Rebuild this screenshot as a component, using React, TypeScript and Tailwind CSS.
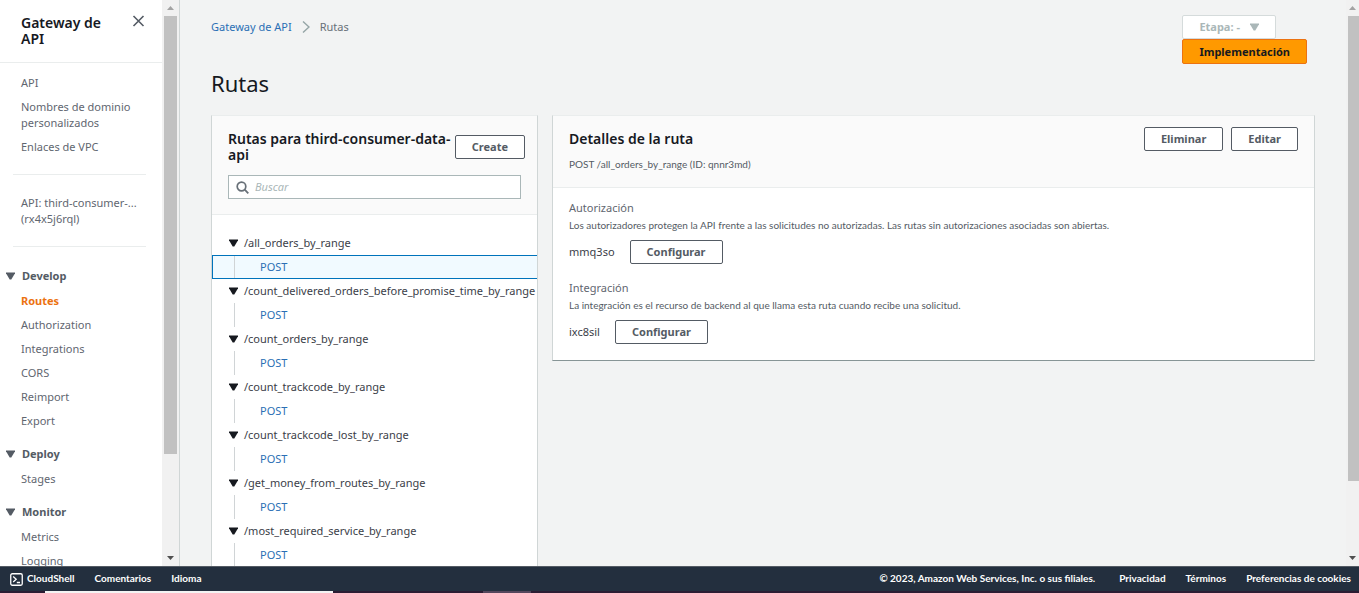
import React from "react";

const topLinks = ["API", "Nombres de dominio personalizados", "Enlaces de VPC"];

const sections = [
  { title: "Develop", items: ["Routes", "Authorization", "Integrations", "CORS", "Reimport", "Export"] },
  { title: "Deploy", items: ["Stages"] },
  { title: "Monitor", items: ["Metrics", "Logging"] },
];

const routes = [
  "/all_orders_by_range",
  "/count_delivered_orders_before_promise_time_by_range",
  "/count_orders_by_range",
  "/count_trackcode_by_range",
  "/count_trackcode_lost_by_range",
  "/get_money_from_routes_by_range",
  "/most_required_service_by_range",
];

function Caret({ className = "" }: { className?: string }) {
  return (
    <svg viewBox="0 0 9 8" className={`h-2 w-[9px] shrink-0 ${className}`} aria-hidden="true">
      <path d="M0 .5h9v.8L5.300 7.500H3.700L0 1.300z" fill="currentColor" />
    </svg>
  );
}

function Scrollbar({ className, thumb }: { className: string; thumb: string }) {
  return (
    <div className={`flex shrink-0 flex-col items-center bg-[#f1f1f1] ${className}`} aria-hidden="true">
      <svg viewBox="0 0 7 4" className="my-1.5 h-1 w-[7px] shrink-0 text-[#a3a3a3]">
        <path d="M0 4h7L3.5 0z" fill="currentColor" />
      </svg>
      <div className="flex w-full flex-1 flex-col">
        <div className={`bg-[#c1c1c1] ${thumb}`} />
      </div>
      <svg viewBox="0 0 7 4" className="my-1.5 h-1 w-[7px] shrink-0 text-[#505050]">
        <path d="M0 0h7L3.5 4z" fill="currentColor" />
      </svg>
    </div>
  );
}

function Button({ children }: { children: React.ReactNode }) {
  return (
    <button
      type="button"
      className="h-6 shrink-0 rounded-xs border border-[#545b64] bg-white px-4 text-[11px] leading-4 font-bold text-[#545b64]"
    >
      {children}
    </button>
  );
}

function Sidebar() {
  return (
    <aside className="flex w-[180px] shrink-0 border-r border-[#d0d6d6] bg-white">
      <nav className="min-w-0 flex-1 overflow-hidden text-[11px] leading-4 text-[#5f6670]">
        <div className="flex items-start justify-between border-b border-[#eaeded] pt-[15px] pr-[17px] pb-[15px] pl-[21px]">
          <h2 className="w-24 text-sm leading-4 font-semibold text-[#16191f]">Gateway de API</h2>
          <button type="button" aria-label="Cerrar" className="text-[#545b64]">
            <svg viewBox="0 0 13 12" className="h-3 w-[13px]" aria-hidden="true">
              <path d="M1.5 1l10 10M11.5 1l-10 10" stroke="currentColor" strokeWidth="1.6" fill="none" />
            </svg>
          </button>
        </div>
        <ul className="flex flex-col gap-2 pt-3 pr-4 pl-[21px]">
          {topLinks.map((l) => (
            <li key={l}>
              <a href="#">{l}</a>
            </li>
          ))}
        </ul>
        <div className="mt-[19px] mr-4 ml-[13px] border-y border-[#eaeded] pt-5 pb-[19px] pl-2">
          <a href="#" className="block">
            API: third-consumer-...
            <br />
            (rx4x5j6rql)
          </a>
        </div>
        <div className="flex flex-col gap-[17px] pt-[21px]">
          {sections.map((s) => (
            <section key={s.title}>
              <h3>
                <button type="button" className="flex items-center gap-[7px] pl-1.5 font-bold text-[#545b64]">
                  <Caret />
                  {s.title}
                </button>
              </h3>
              <ul className="mt-[9px] flex flex-col gap-2 pl-[21px]">
                {s.items.map((i) => (
                  <li key={i}>
                    <a href="#" className={i === "Routes" ? "font-bold text-[#ec7211]" : ""}>
                      {i}
                    </a>
                  </li>
                ))}
              </ul>
            </section>
          ))}
        </div>
      </nav>
      <Scrollbar className="w-[17px]" thumb="mx-0.5 h-[82%]" />
    </aside>
  );
}

function RoutesCard() {
  return (
    <section className="min-w-0 border border-[#d0d6d6] border-t-[#eaeded] bg-white">
      <div className="border-b border-[#eaeded] bg-[#fafafa] px-4 pt-[15px] pb-[15px]">
        <div className="-mr-1 flex items-start justify-between">
          <h2 className="min-w-0 flex-1 text-sm leading-4 font-semibold text-[#16191f]">
            Rutas para third-consumer-data-api
          </h2>
          <div className="mt-1 flex">
            <Button>Create</Button>
          </div>
        </div>
        <label className="mt-3 flex h-6 items-center gap-1.5 border border-[#aab7b8] bg-white px-[7px]">
          <svg viewBox="0 0 13 13" className="size-[13px] shrink-0 text-[#687078]" aria-hidden="true">
            <circle cx="5.5" cy="5.5" r="4.3" fill="none" stroke="currentColor" strokeWidth="1.7" />
            <path d="M8.7 8.7l3.6 3.6" stroke="currentColor" strokeWidth="1.8" />
          </svg>
          <input
            type="search"
            aria-label="Buscar"
            placeholder="Buscar"
            className="min-w-0 flex-1 bg-transparent text-[11px] leading-4 outline-none placeholder:text-[#aab7b8] placeholder:italic"
          />
        </label>
      </div>
      <ul className="pt-4 text-[11px] leading-6 text-[#3b4048]">
        {routes.map((r, n) => (
          <li key={r}>
            <button type="button" className="flex h-6 items-center gap-1.5 pl-[17px] whitespace-nowrap">
              <Caret className="text-[#16191f]" />
              {r}
            </button>
            <div
              className={
                n === 0
                  ? "flex h-6 border border-r-0 border-[#0073bb] bg-[#f1faff] pl-[21px]"
                  : "flex h-6 pl-[22px]"
              }
            >
              <a href="#" className="flex items-center border-l border-[#d0d4d6] pl-[25px] text-[#2a6fb5]">
                POST
              </a>
            </div>
          </li>
        ))}
      </ul>
    </section>
  );
}

function Setting({ title, text, value }: { title: string; text: string; value: string }) {
  return (
    <div className="text-[11px] leading-4 text-[#3b4048]">
      <h3 className="text-[#5f6670]">{title}</h3>
      <p className="mt-px font-[Lato,sans-serif] text-[10px] leading-4 text-[#545b64]">{text}</p>
      <div className="mt-[7px] flex items-center gap-[15px]">
        <span>{value}</span>
        <Button>Configurar</Button>
      </div>
    </div>
  );
}

function DetailsCard() {
  return (
    <section className="min-w-0 border border-[#d0d6d6] border-t-[#eaeded] border-b-[#879596] bg-white">
      <div className="flex items-start justify-between border-b border-[#eaeded] bg-[#fafafa] px-4 pt-[11px] pb-[15px]">
        <div className="pt-1">
          <h2 className="text-sm leading-4 font-semibold text-[#16191f]">Detalles de la ruta</h2>
          <p className="mt-[9px] font-[Lato,sans-serif] text-[10px] leading-4 text-[#545b64]">
            POST /all_orders_by_range (ID: qnnr3md)
          </p>
        </div>
        <div className="flex gap-2">
          <Button>Eliminar</Button>
          <Button>Editar</Button>
        </div>
      </div>
      <div className="flex flex-col gap-4 px-4 pt-3 pb-4">
        <Setting
          title="Autorización"
          text="Los autorizadores protegen la API frente a las solicitudes no autorizadas. Las rutas sin autorizaciones asociadas son abiertas."
          value="mmq3so"
        />
        <Setting
          title="Integración"
          text="La integración es el recurso de backend al que llama esta ruta cuando recibe una solicitud."
          value="ixc8sil"
        />
      </div>
    </section>
  );
}

export default function App() {
  return (
    <div className="flex h-screen flex-col overflow-hidden bg-[#f2f3f3] font-['Noto_Sans','Open_Sans',sans-serif]">
      <div className="flex min-h-0 flex-1">
        <Sidebar />
        <main className="min-w-0 flex-1 overflow-hidden pt-[15px] pr-[31px] pl-[31px]">
          <header className="flex items-start justify-between">
            <div>
              <nav className="flex h-6 items-center gap-2.5 text-[11px] leading-4 text-[#687078]">
                <a href="#" className="text-[#2a6fb5]">
                  Gateway de API
                </a>
                <svg viewBox="0 0 8 12" className="h-3 w-2" aria-hidden="true">
                  <path d="M1 .5L7 6l-6 5.500" stroke="#95a5a6" strokeWidth="1.4" fill="none" />
                </svg>
                <span>Rutas</span>
              </nav>
              <h1 className="mt-[30px] text-[22px] leading-7 text-[#16191f]">Rutas</h1>
            </div>
            <div className="flex flex-col items-start pr-2">
              <button
                type="button"
                disabled
                className="flex h-6 items-center gap-2.5 rounded-xs border border-[#d5dbdb] bg-white px-4 text-[11px] leading-4 font-bold text-[#aab7b8]"
              >
                Etapa: -
                <Caret />
              </button>
              <button
                type="button"
                className="h-[25px] rounded-xs border border-[#ec7211] bg-[#ff9900] px-4 text-[11px] leading-4 font-bold text-[#16191f]"
              >
                Implementación
              </button>
            </div>
          </header>
          <div className="mt-[18px] grid grid-cols-[3fr_7fr] items-start gap-3.5">
            <RoutesCard />
            <DetailsCard />
          </div>
        </main>
        <Scrollbar className="w-[13px]" thumb="ml-0.5 self-stretch h-[87%]" />
      </div>
      <footer className="flex h-[25px] shrink-0 items-center justify-between border-t border-[#545b64] bg-[#232f3e] pr-2 pb-0.5 pl-2.5 font-[Lato,sans-serif] text-[10px] leading-4 font-bold text-white">
        <div className="flex items-center gap-5">
          <a href="#" className="flex items-center gap-1">
            <svg viewBox="0 0 13 13" className="mt-0.5 size-[13px]" aria-hidden="true">
              <rect x=".75" y=".75" width="11.500" height="11.500" rx="1.500" fill="none" stroke="currentColor" strokeWidth="1.3" />
              <path d="M3.200 3.500l3 2.800-3 2.800M6.800 9.500h3.200" fill="none" stroke="currentColor" strokeWidth="1.300" />
            </svg>
            CloudShell
          </a>
          <a href="#">Comentarios</a>
          <a href="#">Idioma</a>
        </div>
        <div className="flex items-center gap-5">
          <span className="pr-1">© 2023, Amazon Web Services, Inc. o sus filiales.</span>
          <a href="#">Privacidad</a>
          <a href="#">Términos</a>
          <a href="#">Preferencias de cookies</a>
        </div>
      </footer>
      <div className="flex h-0.5 shrink-0 bg-[#2b1c33]" aria-hidden="true">
        <div className="ml-[45px] w-72 bg-[#f3f3f3]" />
        <div className="ml-[150px] w-12 bg-[#54465c]" />
      </div>
    </div>
  );
}
